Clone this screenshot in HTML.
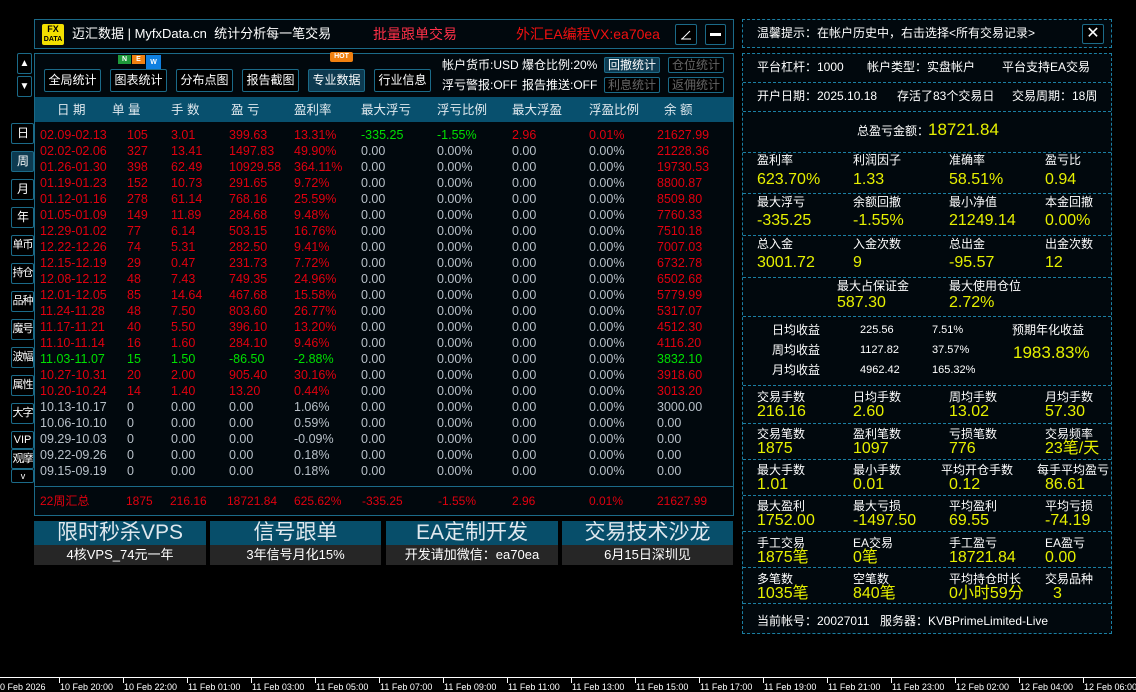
<!DOCTYPE html>
<html><head><meta charset="utf-8">
<style>
*{margin:0;padding:0;box-sizing:border-box}
body{width:1136px;height:691px;background:#000;position:relative;overflow:hidden;font-family:"Liberation Sans","Noto Sans CJK SC",sans-serif;color:#fff;font-size:12px;line-height:1.2}
.a{position:absolute;white-space:nowrap}
.box{position:absolute;border:1px solid #1b6a88;background:#01080d}
.btn{position:absolute;border:1px solid #1b6a88;border-radius:2px;background:#000;color:#fff;font-size:12px;text-align:center;line-height:20px;white-space:nowrap}
.sb{position:absolute;left:11px;width:23px;border:1px solid #1b6a88;border-radius:2px;background:#000;color:#fff;font-size:11px;text-align:center;white-space:nowrap;letter-spacing:-1px;overflow:visible}
.row{position:absolute;left:40px;height:16px;font-size:12.5px;line-height:16px;color:#e0000f}
.row span{position:absolute;white-space:nowrap}
.row span:nth-child(1){left:0}.row span:nth-child(2){left:87px}.row span:nth-child(3){left:131px}.row span:nth-child(4){left:189px}.row span:nth-child(5){left:254px}.row span:nth-child(6){left:321px}.row span:nth-child(7){left:397px}.row span:nth-child(8){left:472px}.row span:nth-child(9){left:549px}.row span:nth-child(10){left:617px}
.g{color:#b8c0c8}.gr{color:#00e000}
.th{position:absolute;top:103px;font-size:12.5px;line-height:14px;color:#dfe8ee}
.promo{position:absolute;top:521px;height:44px}
.promo .t{height:24px;background:#074e6a;color:#e0e8ee;font-size:21px;text-align:center;line-height:24px}
.promo .b{height:20px;background:#262626;color:#fff;font-size:13px;text-align:center;line-height:20px}
.rp{position:absolute;left:742px;width:370px;border:1px dashed #1b7fa3;background:#01080d}
.sec{position:absolute;left:0;width:368px;border-bottom:1px dashed #1b7fa3}
.lb{position:absolute;font-size:12px;line-height:14px;color:#fff;white-space:nowrap}
.vl{position:absolute;font-size:16px;line-height:18px;color:#e6f000;white-space:nowrap}
.tk{position:absolute;top:677px;width:1px;height:6px;background:#fff}
.tl{position:absolute;top:682px;font-size:9px;line-height:10px;color:#fff;white-space:nowrap}
</style></head><body>

<!-- title box -->
<div class="box" style="left:34px;top:19px;width:700px;height:30px"></div>
<div class="a" style="left:42px;top:24px;width:22px;height:21px;background:#f2e000;border-radius:2px;color:#000;font-weight:bold;text-align:center;font-size:9px;line-height:9px;padding-top:1px">FX<br><span style="font-size:7px">DATA</span></div>
<div class="a" style="left:72px;top:26px;font-size:13px;line-height:16px">迈汇数据 | MyfxData.cn&nbsp; 统计分析每一笔交易</div>
<div class="a" style="left:373px;top:26px;font-size:14px;line-height:16px;color:#ff3048">批量跟单交易</div>
<div class="a" style="left:516px;top:26px;font-size:14px;line-height:16px;color:#f01010">外汇EA编程VX:ea70ea</div>
<div class="btn" style="left:675px;top:24px;width:22px;height:21px"><svg width="14" height="14" viewBox="0 0 14 14" style="margin-top:3px"><path d="M2 11H12M3 11L11 3" stroke="#fff" stroke-width="1"/></svg></div>
<div class="btn" style="left:705px;top:24px;width:21px;height:21px"><div style="width:11px;height:3px;background:#fff;margin:8px auto 0"></div></div>

<!-- main panel -->
<div class="box" style="left:34px;top:53px;width:700px;height:463px"></div>
<div class="a" style="left:35px;top:97px;width:698px;height:25px;background:#08506e"></div>
<div class="a" style="left:35px;top:486px;width:698px;height:1px;background:#1b6a88"></div>

<div class="a" style="left:118px;top:55px;width:13px;height:9px;background:#1e9a3a;font-size:7px;text-align:center;line-height:9px;font-weight:bold">N</div>
<div class="a" style="left:132px;top:55px;width:13px;height:9px;background:#f08010;font-size:7px;text-align:center;line-height:9px;font-weight:bold">E</div>
<div class="a" style="left:146px;top:55px;width:15px;height:14px;background:#1080e0;font-size:7px;text-align:center;line-height:16px;font-weight:bold">W</div>
<div class="a" style="left:330px;top:52px;width:23px;height:10px;background:#f08010;font-size:7px;text-align:center;line-height:10px;font-weight:bold;border-radius:2px">HOT</div>

<div class="btn" style="left:44px;top:69px;width:57px;height:23px">全局统计</div>
<div class="btn" style="left:110px;top:69px;width:57px;height:23px">图表统计</div>
<div class="btn" style="left:176px;top:69px;width:57px;height:23px">分布点图</div>
<div class="btn" style="left:242px;top:69px;width:57px;height:23px">报告截图</div>
<div class="btn" style="left:308px;top:69px;width:57px;height:23px;background:#0d3a50">专业数据</div>
<div class="btn" style="left:374px;top:69px;width:57px;height:23px">行业信息</div>

<div class="a" style="left:442px;top:58px;font-size:12px;line-height:14px">帐户货币:USD</div>
<div class="a" style="left:522px;top:58px;font-size:12px;line-height:14px">爆仓比例:20%</div>
<div class="a" style="left:442px;top:78px;font-size:12px;line-height:14px">浮亏警报:OFF</div>
<div class="a" style="left:522px;top:78px;font-size:12px;line-height:14px">报告推送:OFF</div>
<div class="btn" style="left:604px;top:57px;width:56px;height:16px;line-height:14px;background:#0d3a50">回撤统计</div>
<div class="btn" style="left:668px;top:57px;width:56px;height:16px;line-height:14px;color:#666">仓位统计</div>
<div class="btn" style="left:604px;top:77px;width:56px;height:16px;line-height:14px;color:#666">利息统计</div>
<div class="btn" style="left:668px;top:77px;width:56px;height:16px;line-height:14px;color:#666">返佣统计</div>

<div class="th" style="left:57px">日 期</div><div class="th" style="left:112px">单 量</div><div class="th" style="left:171px">手 数</div><div class="th" style="left:231px">盈 亏</div><div class="th" style="left:294px">盈利率</div><div class="th" style="left:361px">最大浮亏</div><div class="th" style="left:437px">浮亏比例</div><div class="th" style="left:512px">最大浮盈</div><div class="th" style="left:589px">浮盈比例</div><div class="th" style="left:664px">余 额</div>

<div class="row" style="top:127px"><span>02.09-02.13</span><span>105</span><span>3.01</span><span>399.63</span><span>13.31%</span><span class="gr">-335.25</span><span class="gr">-1.55%</span><span>2.96</span><span>0.01%</span><span>21627.99</span></div>
<div class="row" style="top:143px"><span>02.02-02.06</span><span>327</span><span>13.41</span><span>1497.83</span><span>49.90%</span><span class="g">0.00</span><span class="g">0.00%</span><span class="g">0.00</span><span class="g">0.00%</span><span>21228.36</span></div>
<div class="row" style="top:159px"><span>01.26-01.30</span><span>398</span><span>62.49</span><span>10929.58</span><span>364.11%</span><span class="g">0.00</span><span class="g">0.00%</span><span class="g">0.00</span><span class="g">0.00%</span><span>19730.53</span></div>
<div class="row" style="top:175px"><span>01.19-01.23</span><span>152</span><span>10.73</span><span>291.65</span><span>9.72%</span><span class="g">0.00</span><span class="g">0.00%</span><span class="g">0.00</span><span class="g">0.00%</span><span>8800.87</span></div>
<div class="row" style="top:191px"><span>01.12-01.16</span><span>278</span><span>61.14</span><span>768.16</span><span>25.59%</span><span class="g">0.00</span><span class="g">0.00%</span><span class="g">0.00</span><span class="g">0.00%</span><span>8509.80</span></div>
<div class="row" style="top:207px"><span>01.05-01.09</span><span>149</span><span>11.89</span><span>284.68</span><span>9.48%</span><span class="g">0.00</span><span class="g">0.00%</span><span class="g">0.00</span><span class="g">0.00%</span><span>7760.33</span></div>
<div class="row" style="top:223px"><span>12.29-01.02</span><span>77</span><span>6.14</span><span>503.15</span><span>16.76%</span><span class="g">0.00</span><span class="g">0.00%</span><span class="g">0.00</span><span class="g">0.00%</span><span>7510.18</span></div>
<div class="row" style="top:239px"><span>12.22-12.26</span><span>74</span><span>5.31</span><span>282.50</span><span>9.41%</span><span class="g">0.00</span><span class="g">0.00%</span><span class="g">0.00</span><span class="g">0.00%</span><span>7007.03</span></div>
<div class="row" style="top:255px"><span>12.15-12.19</span><span>29</span><span>0.47</span><span>231.73</span><span>7.72%</span><span class="g">0.00</span><span class="g">0.00%</span><span class="g">0.00</span><span class="g">0.00%</span><span>6732.78</span></div>
<div class="row" style="top:271px"><span>12.08-12.12</span><span>48</span><span>7.43</span><span>749.35</span><span>24.96%</span><span class="g">0.00</span><span class="g">0.00%</span><span class="g">0.00</span><span class="g">0.00%</span><span>6502.68</span></div>
<div class="row" style="top:287px"><span>12.01-12.05</span><span>85</span><span>14.64</span><span>467.68</span><span>15.58%</span><span class="g">0.00</span><span class="g">0.00%</span><span class="g">0.00</span><span class="g">0.00%</span><span>5779.99</span></div>
<div class="row" style="top:303px"><span>11.24-11.28</span><span>48</span><span>7.50</span><span>803.60</span><span>26.77%</span><span class="g">0.00</span><span class="g">0.00%</span><span class="g">0.00</span><span class="g">0.00%</span><span>5317.07</span></div>
<div class="row" style="top:319px"><span>11.17-11.21</span><span>40</span><span>5.50</span><span>396.10</span><span>13.20%</span><span class="g">0.00</span><span class="g">0.00%</span><span class="g">0.00</span><span class="g">0.00%</span><span>4512.30</span></div>
<div class="row" style="top:335px"><span>11.10-11.14</span><span>16</span><span>1.60</span><span>284.10</span><span>9.46%</span><span class="g">0.00</span><span class="g">0.00%</span><span class="g">0.00</span><span class="g">0.00%</span><span>4116.20</span></div>
<div class="row gr" style="top:351px"><span>11.03-11.07</span><span>15</span><span>1.50</span><span>-86.50</span><span>-2.88%</span><span class="g">0.00</span><span class="g">0.00%</span><span class="g">0.00</span><span class="g">0.00%</span><span>3832.10</span></div>
<div class="row" style="top:367px"><span>10.27-10.31</span><span>20</span><span>2.00</span><span>905.40</span><span>30.16%</span><span class="g">0.00</span><span class="g">0.00%</span><span class="g">0.00</span><span class="g">0.00%</span><span>3918.60</span></div>
<div class="row" style="top:383px"><span>10.20-10.24</span><span>14</span><span>1.40</span><span>13.20</span><span>0.44%</span><span class="g">0.00</span><span class="g">0.00%</span><span class="g">0.00</span><span class="g">0.00%</span><span>3013.20</span></div>
<div class="row g" style="top:399px"><span>10.13-10.17</span><span>0</span><span>0.00</span><span>0.00</span><span>1.06%</span><span>0.00</span><span>0.00%</span><span>0.00</span><span>0.00%</span><span>3000.00</span></div>
<div class="row g" style="top:415px"><span>10.06-10.10</span><span>0</span><span>0.00</span><span>0.00</span><span>0.59%</span><span>0.00</span><span>0.00%</span><span>0.00</span><span>0.00%</span><span>0.00</span></div>
<div class="row g" style="top:431px"><span>09.29-10.03</span><span>0</span><span>0.00</span><span>0.00</span><span>-0.09%</span><span>0.00</span><span>0.00%</span><span>0.00</span><span>0.00%</span><span>0.00</span></div>
<div class="row g" style="top:447px"><span>09.22-09.26</span><span>0</span><span>0.00</span><span>0.00</span><span>0.18%</span><span>0.00</span><span>0.00%</span><span>0.00</span><span>0.00%</span><span>0.00</span></div>
<div class="row g" style="top:463px"><span>09.15-09.19</span><span>0</span><span>0.00</span><span>0.00</span><span>0.18%</span><span>0.00</span><span>0.00%</span><span>0.00</span><span>0.00%</span><span>0.00</span></div>

<div class="row" style="top:493px;font-size:12px"><span>22周汇总</span><span style="left:86px!important">1875</span><span style="left:130px!important">216.16</span><span style="left:187px!important">18721.84</span><span style="left:254px!important">625.62%</span><span style="left:322px!important">-335.25</span><span style="left:398px!important">-1.55%</span><span style="left:472px!important">2.96</span><span style="left:549px!important">0.01%</span><span style="left:617px!important">21627.99</span></div>

<!-- left side buttons -->
<div class="btn" style="left:17px;top:53px;width:15px;height:21px;font-size:10px">▲</div>
<div class="btn" style="left:17px;top:76px;width:15px;height:21px;font-size:10px">▼</div>
<div class="sb" style="top:123px;height:21px;line-height:19px;font-size:12px">日</div>
<div class="sb" style="top:151px;height:21px;line-height:19px;font-size:12px;background:#0d3a50">周</div>
<div class="sb" style="top:179px;height:21px;line-height:19px;font-size:12px">月</div>
<div class="sb" style="top:207px;height:21px;line-height:19px;font-size:12px">年</div>
<div class="sb" style="top:235px;height:21px;line-height:19px">单币</div>
<div class="sb" style="top:263px;height:21px;line-height:19px">持仓</div>
<div class="sb" style="top:291px;height:21px;line-height:19px">品种</div>
<div class="sb" style="top:319px;height:21px;line-height:19px">魔号</div>
<div class="sb" style="top:347px;height:21px;line-height:19px">波幅</div>
<div class="sb" style="top:375px;height:21px;line-height:19px">属性</div>
<div class="sb" style="top:403px;height:21px;line-height:19px">大字</div>
<div class="sb" style="top:431px;height:18px;line-height:16px;letter-spacing:0">VIP</div>
<div class="sb" style="top:449px;height:20px;line-height:18px">观摩</div>
<div class="sb" style="top:469px;height:14px;line-height:12px;font-size:9px">v</div>

<!-- promos -->
<div class="promo" style="left:34px;width:172px"><div class="t">限时秒杀VPS</div><div class="b">4核VPS_74元一年</div></div>
<div class="promo" style="left:210px;width:171px"><div class="t">信号跟单</div><div class="b">3年信号月化15%</div></div>
<div class="promo" style="left:386px;width:172px"><div class="t">EA定制开发</div><div class="b">开发请加微信：ea70ea</div></div>
<div class="promo" style="left:562px;width:171px"><div class="t">交易技术沙龙</div><div class="b">6月15日深圳见</div></div>

<!-- right panel -->
<div class="rp" style="top:19px;height:29px"></div>
<div class="a" style="left:757px;top:26px;font-size:12px;line-height:14px">温馨提示：在帐户历史中，右击选择&lt;所有交易记录&gt;</div>
<div class="btn" style="left:1082px;top:24px;width:22px;height:20px;font-size:16px;line-height:18px">✕</div>

<div class="rp" style="top:53px;height:581px">
 <div class="sec" style="top:0;height:29px"></div>
 <div class="sec" style="top:29px;height:29px"></div>
 <div class="sec" style="top:58px;height:41px"></div>
 <div class="sec" style="top:99px;height:41px"></div>
 <div class="sec" style="top:140px;height:42px"></div>
 <div class="sec" style="top:182px;height:42px"></div>
 <div class="sec" style="top:224px;height:39px"></div>
 <div class="sec" style="top:263px;height:69px"></div>
 <div class="sec" style="top:332px;height:38px"></div>
 <div class="sec" style="top:370px;height:36px"></div>
 <div class="sec" style="top:406px;height:36px"></div>
 <div class="sec" style="top:442px;height:36px"></div>
 <div class="sec" style="top:478px;height:36px"></div>
 <div class="sec" style="top:514px;height:36px"></div>
</div>

<div class="lb" style="left:757px;top:60px">平台杠杆：1000</div>
<div class="lb" style="left:867px;top:60px">帐户类型：实盘帐户</div>
<div class="lb" style="left:1002px;top:60px">平台支持EA交易</div>
<div class="lb" style="left:757px;top:89px">开户日期：2025.10.18</div>
<div class="lb" style="left:897px;top:89px">存活了83个交易日</div>
<div class="lb" style="left:1012px;top:89px">交易周期：18周</div>
<div class="lb" style="left:857px;top:124px">总盈亏金额：</div>
<div class="vl" style="left:928px;top:121px;font-size:17px">18721.84</div>

<div class="lb" style="left:757px;top:153px">盈利率</div><div class="lb" style="left:853px;top:153px">利润因子</div><div class="lb" style="left:949px;top:153px">准确率</div><div class="lb" style="left:1045px;top:153px">盈亏比</div>
<div class="vl" style="left:757px;top:171px">623.70%</div><div class="vl" style="left:853px;top:171px">1.33</div><div class="vl" style="left:949px;top:171px">58.51%</div><div class="vl" style="left:1045px;top:171px">0.94</div>

<div class="lb" style="left:757px;top:195px">最大浮亏</div><div class="lb" style="left:853px;top:195px">余额回撤</div><div class="lb" style="left:949px;top:195px">最小净值</div><div class="lb" style="left:1045px;top:195px">本金回撤</div>
<div class="vl" style="left:757px;top:212px">-335.25</div><div class="vl" style="left:853px;top:212px">-1.55%</div><div class="vl" style="left:949px;top:212px">21249.14</div><div class="vl" style="left:1045px;top:212px">0.00%</div>

<div class="lb" style="left:757px;top:237px">总入金</div><div class="lb" style="left:853px;top:237px">入金次数</div><div class="lb" style="left:949px;top:237px">总出金</div><div class="lb" style="left:1045px;top:237px">出金次数</div>
<div class="vl" style="left:757px;top:254px">3001.72</div><div class="vl" style="left:853px;top:254px">9</div><div class="vl" style="left:949px;top:254px">-95.57</div><div class="vl" style="left:1045px;top:254px">12</div>

<div class="lb" style="left:837px;top:279px">最大占保证金</div><div class="lb" style="left:949px;top:279px">最大使用仓位</div>
<div class="vl" style="left:837px;top:294px">587.30</div><div class="vl" style="left:949px;top:294px">2.72%</div>

<div class="lb" style="left:772px;top:323px">日均收益</div><div class="lb" style="left:860px;top:323px;font-size:11px">225.56</div><div class="lb" style="left:932px;top:323px;font-size:11px">7.51%</div>
<div class="lb" style="left:772px;top:343px">周均收益</div><div class="lb" style="left:860px;top:343px;font-size:11px">1127.82</div><div class="lb" style="left:932px;top:343px;font-size:11px">37.57%</div>
<div class="lb" style="left:772px;top:363px">月均收益</div><div class="lb" style="left:860px;top:363px;font-size:11px">4962.42</div><div class="lb" style="left:932px;top:363px;font-size:11px">165.32%</div>
<div class="lb" style="left:1012px;top:323px">预期年化收益</div>
<div class="vl" style="left:1013px;top:344px;font-size:17px">1983.83%</div>

<div class="lb" style="left:757px;top:390px">交易手数</div><div class="lb" style="left:853px;top:390px">日均手数</div><div class="lb" style="left:949px;top:390px">周均手数</div><div class="lb" style="left:1045px;top:390px">月均手数</div>
<div class="vl" style="left:757px;top:403px">216.16</div><div class="vl" style="left:853px;top:403px">2.60</div><div class="vl" style="left:949px;top:403px">13.02</div><div class="vl" style="left:1045px;top:403px">57.30</div>

<div class="lb" style="left:757px;top:427px">交易笔数</div><div class="lb" style="left:853px;top:427px">盈利笔数</div><div class="lb" style="left:949px;top:427px">亏损笔数</div><div class="lb" style="left:1045px;top:427px">交易频率</div>
<div class="vl" style="left:757px;top:440px">1875</div><div class="vl" style="left:853px;top:440px">1097</div><div class="vl" style="left:949px;top:440px">776</div><div class="vl" style="left:1045px;top:440px">23笔/天</div>

<div class="lb" style="left:757px;top:463px">最大手数</div><div class="lb" style="left:853px;top:463px">最小手数</div><div class="lb" style="left:941px;top:463px">平均开仓手数</div><div class="lb" style="left:1037px;top:463px">每手平均盈亏</div>
<div class="vl" style="left:757px;top:476px">1.01</div><div class="vl" style="left:853px;top:476px">0.01</div><div class="vl" style="left:949px;top:476px">0.12</div><div class="vl" style="left:1045px;top:476px">86.61</div>

<div class="lb" style="left:757px;top:499px">最大盈利</div><div class="lb" style="left:853px;top:499px">最大亏损</div><div class="lb" style="left:949px;top:499px">平均盈利</div><div class="lb" style="left:1045px;top:499px">平均亏损</div>
<div class="vl" style="left:757px;top:512px">1752.00</div><div class="vl" style="left:853px;top:512px">-1497.50</div><div class="vl" style="left:949px;top:512px">69.55</div><div class="vl" style="left:1045px;top:512px">-74.19</div>

<div class="lb" style="left:757px;top:536px">手工交易</div><div class="lb" style="left:853px;top:536px">EA交易</div><div class="lb" style="left:949px;top:536px">手工盈亏</div><div class="lb" style="left:1045px;top:536px">EA盈亏</div>
<div class="vl" style="left:757px;top:549px">1875笔</div><div class="vl" style="left:853px;top:549px">0笔</div><div class="vl" style="left:949px;top:549px">18721.84</div><div class="vl" style="left:1045px;top:549px">0.00</div>

<div class="lb" style="left:757px;top:572px">多笔数</div><div class="lb" style="left:853px;top:572px">空笔数</div><div class="lb" style="left:949px;top:572px">平均持仓时长</div><div class="lb" style="left:1045px;top:572px">交易品种</div>
<div class="vl" style="left:757px;top:585px">1035笔</div><div class="vl" style="left:853px;top:585px">840笔</div><div class="vl" style="left:949px;top:585px">0小时59分</div><div class="vl" style="left:1053px;top:585px">3</div>

<div class="lb" style="left:757px;top:614px">当前帐号：20027011</div>
<div class="lb" style="left:880px;top:614px">服务器：KVBPrimeLimited-Live</div>

<!-- time axis -->
<div class="a" style="left:0;top:677px;width:1136px;height:1px;background:#fff"></div>
<div class="tl" style="left:0">0 Feb 2026</div>
<div class="tk" style="left:59px"></div><div class="tl" style="left:60px">10 Feb 20:00</div>
<div class="tk" style="left:123px"></div><div class="tl" style="left:124px">10 Feb 22:00</div>
<div class="tk" style="left:187px"></div><div class="tl" style="left:188px">11 Feb 01:00</div>
<div class="tk" style="left:251px"></div><div class="tl" style="left:252px">11 Feb 03:00</div>
<div class="tk" style="left:315px"></div><div class="tl" style="left:316px">11 Feb 05:00</div>
<div class="tk" style="left:379px"></div><div class="tl" style="left:380px">11 Feb 07:00</div>
<div class="tk" style="left:443px"></div><div class="tl" style="left:444px">11 Feb 09:00</div>
<div class="tk" style="left:507px"></div><div class="tl" style="left:508px">11 Feb 11:00</div>
<div class="tk" style="left:571px"></div><div class="tl" style="left:572px">11 Feb 13:00</div>
<div class="tk" style="left:635px"></div><div class="tl" style="left:636px">11 Feb 15:00</div>
<div class="tk" style="left:699px"></div><div class="tl" style="left:700px">11 Feb 17:00</div>
<div class="tk" style="left:763px"></div><div class="tl" style="left:764px">11 Feb 19:00</div>
<div class="tk" style="left:827px"></div><div class="tl" style="left:828px">11 Feb 21:00</div>
<div class="tk" style="left:891px"></div><div class="tl" style="left:892px">11 Feb 23:00</div>
<div class="tk" style="left:955px"></div><div class="tl" style="left:956px">12 Feb 02:00</div>
<div class="tk" style="left:1019px"></div><div class="tl" style="left:1020px">12 Feb 04:00</div>
<div class="tk" style="left:1083px"></div><div class="tl" style="left:1084px">12 Feb 06:00</div>
</body></html>
